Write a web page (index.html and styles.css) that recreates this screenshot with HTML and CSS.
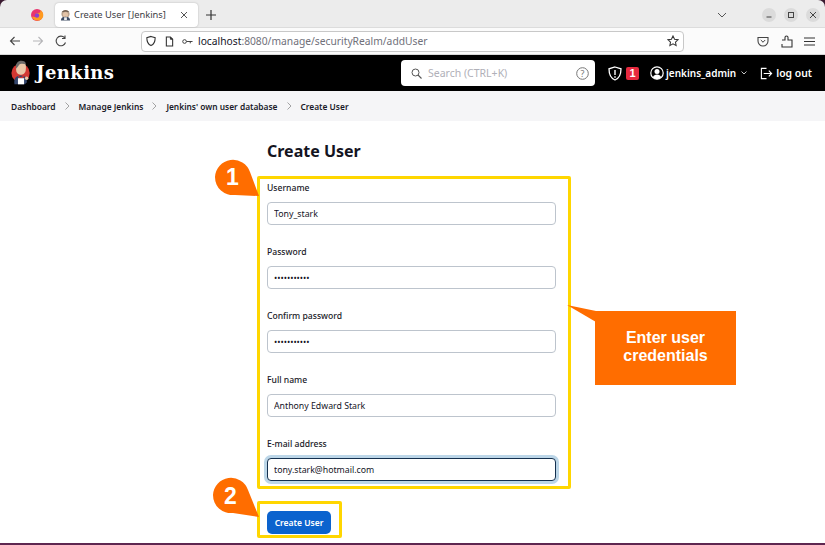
FILE: index.html
```html
<!DOCTYPE html>
<html lang="en">
<head>
<meta charset="utf-8">
<title>Create User [Jenkins]</title>
<link rel="stylesheet" href="styles.css">
</head>
<body>
<div class="tabbar">
  <svg class="ff" width="14" height="14" viewBox="0 0 14 14"><circle cx="7" cy="7" r="6" fill="#e8356f"/><path d="M2 9a6 6 0 0 0 11 0c1-3-.5-6-3-7 1 2 0 3-2 3S5 6 5.500 8 2 8 2 9z" fill="#ff9a1f"/><circle cx="7" cy="7.500" r="2.200" fill="#8a3fd1"/></svg>
  <div class="tab">
    <svg class="fav" width="11" height="12" viewBox="0 0 12 12"><circle cx="6" cy="5" r="4.500" fill="#b9a28d"/><path d="M2 3c1-3 7-3 8 0-2-1-6-1-8 0z" fill="#5a4a3d"/><circle cx="6" cy="5.500" r="2.800" fill="#e3c3a6"/><path d="M1 12c0-3 2-4 5-4s5 1 5 4z" fill="#3d4b63"/><rect x="4.500" y="8.500" width="3" height="3" fill="#eee"/></svg>
    <span class="tabtitle">Create User [Jenkins]</span>
    <svg class="tabx" width="8" height="8" viewBox="0 0 8 8"><path d="M1 1l6 6M7 1L1 7" stroke="#555" stroke-width="1"/></svg>
  </div>
  <svg class="plus" width="10" height="10" viewBox="0 0 10 10"><path d="M5 0v10M0 5h10" stroke="#333" stroke-width="1.200"/></svg>
  <svg class="tabdrop" width="10" height="6" viewBox="0 0 10 6"><path d="M1 1l4 4 4-4" fill="none" stroke="#555" stroke-width="1"/></svg>
  <div class="winbtn"><svg width="8" height="8" viewBox="0 0 8 8"><path d="M1.500 6h5" stroke="#444"/></svg></div>
  <div class="winbtn"><svg width="8" height="8" viewBox="0 0 8 8"><rect x="1.500" y="1.500" width="5" height="5" fill="none" stroke="#444"/></svg></div>
  <div class="winbtn"><svg width="8" height="8" viewBox="0 0 8 8"><path d="M1 1l6 6M7 1L1 7" stroke="#444"/></svg></div>
</div>

<div class="navbar">
  <svg class="navicon" width="12" height="12" viewBox="0 0 12 12"><path d="M11 6H1.500M5.500 2l-4 4 4 4" fill="none" stroke="#444" stroke-width="1.100"/></svg>
  <svg class="navicon" width="12" height="12" viewBox="0 0 12 12"><path d="M1 6h9.500M6.500 2l4 4-4 4" fill="none" stroke="#b5b5b8" stroke-width="1.100"/></svg>
  <svg class="navicon" width="12" height="12" viewBox="0 0 12 12"><path d="M10.500 7.500A4.800 4.800 0 1 1 9.500 2.700M10 .5v3H7" fill="none" stroke="#444" stroke-width="1.100"/></svg>
  <div class="urlbar">
    <svg width="10" height="12" viewBox="0 0 12 13"><path d="M6 1l5 1.500c0 5-1.500 8-5 9.500C2.500 10.500 1 7.500 1 2.500z" fill="none" stroke="#333" stroke-width="1.300"/></svg>
    <svg class="page" width="9" height="11" viewBox="0 0 10 12"><path d="M1.500 1h4.500l2.500 2.500V11h-7z" fill="none" stroke="#333" stroke-width="1.200"/><path d="M6 1v2.500h2.500" fill="#333" stroke="#333"/></svg>
    <svg class="key" width="11" height="7" viewBox="0 0 12 7"><circle cx="2.800" cy="3.500" r="2" fill="none" stroke="#333"/><path d="M5 3.500h6.500M9 3.500v2" stroke="#333"/></svg>
    <span class="url"><b>localhost</b>:8080/manage/securityRealm/addUser</span>
    <svg class="star" width="12" height="12" viewBox="0 0 13 13"><path d="M6.500 1l1.700 3.600 3.800.5-2.800 2.600.7 3.800-3.400-1.900-3.400 1.900.7-3.800L1 5.100l3.800-.5z" fill="none" stroke="#333" stroke-width="1.100"/></svg>
  </div>
  <svg class="pocket" width="12" height="11" viewBox="0 0 12 11"><path d="M1 1.500h10V5a5 5 0 0 1-10 0z" fill="none" stroke="#444" stroke-width="1.100"/><path d="M3.800 4L6 6.200 8.200 4" fill="none" stroke="#444"/></svg>
  <svg class="ext" width="12" height="13" viewBox="0 0 12 13"><path d="M1 5h3V2.500a1.500 1.500 0 0 1 3 0V5h4v7H1v-3" fill="none" stroke="#333" stroke-width="1.100"/></svg>
  <svg class="menu" width="11" height="9" viewBox="0 0 11 9"><path d="M0 1h11M0 4.500h11M0 8h11" stroke="#333" stroke-width="1.100"/></svg>
</div>

<header class="jheader">
  <svg class="jlogo" width="20" height="26" viewBox="0 0 23 28">
    <circle cx="11" cy="14" r="10.500" fill="#d33833"/>
    <path d="M4 27c-1-6 1-10 7-10s8 4 7 8l-2 2z" fill="#34466c"/>
    <path d="M6 11c-1-8 2-10 6-10s6 3 5 9c0 3-2 6-5 6-3 0-6-2-6-5z" fill="#eac7a8"/>
    <path d="M6 9c-1-6 2-9 6-9 3 0 5 1 5 4-3-1-7-1-8 1z" fill="#6c6a68"/>
    <path d="M8 17l3 2 4-2-1 3h-5z" fill="#d33833"/>
    <rect x="8" y="20" width="7" height="7" fill="#fff"/>
    <circle cx="18" cy="20" r="2" fill="#eac7a8"/>
  </svg>
  <span class="jname">Jenkins</span>
  <div class="search">
    <svg width="11" height="11" viewBox="0 0 11 11"><circle cx="4.500" cy="4.500" r="3.500" fill="none" stroke="#555" stroke-width="1"/><path d="M7 7l3.500 3.500" stroke="#555" stroke-width="1.100"/></svg>
    <span class="searchtext">Search (CTRL+K)</span>
    <svg class="help" width="13" height="13" viewBox="0 0 13 13"><circle cx="6.500" cy="6.500" r="5.800" fill="none" stroke="#777" stroke-width="1"/><text x="6.500" y="9.500" text-anchor="middle" class="helpq">?</text></svg>
  </div>
  <svg class="warnshield" width="14" height="15" viewBox="0 0 14 15"><path d="M7 1l6 1.800c0 6-2 9.700-6 11.200C3 12.500 1 8.800 1 2.800z" fill="none" stroke="#fff" stroke-width="1.300"/><path d="M7 4v5M7 10.300v1.400" stroke="#fff" stroke-width="1.400"/></svg>
  <span class="badge">1</span>
  <svg class="usericon" width="14" height="14" viewBox="0 0 14 14"><circle cx="7" cy="7" r="6.200" fill="none" stroke="#fff" stroke-width="1.200"/><circle cx="7" cy="5.500" r="2.500" fill="#fff"/><path d="M2.800 11.500c.8-2.300 2.300-3 4.200-3s3.400.7 4.200 3A6 6 0 0 1 2.800 11.500z" fill="#fff"/></svg>
  <span class="uname">jenkins_admin</span>
  <svg class="chev" width="6" height="4" viewBox="0 0 6 4"><path d="M.5.500L3 3 5.500.500" fill="none" stroke="#ddd" stroke-width=".9"/></svg>
  <svg class="logout" width="13" height="13" viewBox="0 0 14 13"><path d="M6 1H1.500v11H6M7 1h-1M6 12h1" fill="none" stroke="#fff" stroke-width="1.200"/><path d="M4 6.500h8.500M9.500 3.500l3 3-3 3" fill="none" stroke="#fff" stroke-width="1.200"/></svg>
  <span class="logouttext">log out</span>
</header>

<nav class="crumbs">
  <span>Dashboard</span>
  <svg class="sep" width="5" height="8" viewBox="0 0 5 8"><path d="M.5.500L4 4 .5 7.500" fill="none" stroke="#999" stroke-width=".9"/></svg>
  <span>Manage Jenkins</span>
  <svg class="sep" width="5" height="8" viewBox="0 0 5 8"><path d="M.5.500L4 4 .5 7.500" fill="none" stroke="#999" stroke-width=".9"/></svg>
  <span>Jenkins' own user database</span>
  <svg class="sep" width="5" height="8" viewBox="0 0 5 8"><path d="M.5.500L4 4 .5 7.500" fill="none" stroke="#999" stroke-width=".9"/></svg>
  <span>Create User</span>
</nav>

<main class="content">
  <h1>Create User</h1>
  <form class="userform">
    <div class="field"><label for="f1">Username</label><input id="f1" type="text" value="Tony_stark"></div>
    <div class="field"><label for="f2">Password</label><input id="f2" class="pw" type="password" value="abcdefghijk"></div>
    <div class="field"><label for="f3">Confirm password</label><input id="f3" class="pw" type="password" value="abcdefghijk"></div>
    <div class="field"><label for="f4">Full name</label><input id="f4" type="text" value="Anthony Edward Stark"></div>
    <div class="field"><label for="f5">E-mail address</label><input id="f5" class="focus" type="text" value="tony.stark@hotmail.com"></div>
    <button type="button" class="submit">Create User</button>
  </form>
</main>

<div class="bottomline"></div>

<div class="hl hl1"></div>
<div class="hl hl2"></div>
<svg class="overlay" width="825" height="545" viewBox="0 0 825 545">
  <path d="M215 177a18 18 0 0 1 35 -5L259 196 235 195a18 18 0 0 1-20-18z" fill="#ff6d00"/>
  <path d="M213 495a18 18 0 0 1 35 -5L259 517 233 513a18 18 0 0 1-20-18z" fill="#ff6d00"/>
  <path d="M567 305L596 311V322z" fill="#ff6d00"/>
</svg>
<span class="num num1">1</span>
<span class="num num2">2</span>
<div class="callout">Enter user credentials</div>
</body>
</html>
```
FILE: styles.css
```css
* { box-sizing: border-box; }
html, body { margin: 0; padding: 0; }
body {
  width: 825px;
  height: 545px;
  overflow: hidden;
  position: relative;
  display: flex;
  flex-direction: column;
  background: #3a1a30;
  font-family: "Noto Sans", sans-serif;
  color: #14141f;
}
svg { flex-shrink: 0; }
.tabbar {
  height: 28px;
  flex-shrink: 0;
  background: #ececec;
  border-radius: 7px 7px 0 0;
  display: flex;
  align-items: center;
  padding-top: 2px;
  border-bottom: 1px solid #dcdcdc;
}
.ff { margin-left: 30px; }
.tab {
  margin-left: 11px;
  width: 143px;
  height: 24px;
  flex-shrink: 0;
  background: #fff;
  border-radius: 4px;
  box-shadow: 0 0 2px rgba(0,0,0,.25);
  display: flex;
  align-items: center;
  padding-left: 5px;
}
.tabtitle { margin-left: 3px; font-size: 9.3px; color: #3c3c44; white-space: nowrap; }
.tabx { margin-left: auto; margin-right: 10px; }
.plus { margin-left: 8px; }
.tabdrop { margin-left: 501px; }
.winbtn {
  width: 14px;
  height: 14px;
  flex-shrink: 0;
  border-radius: 50%;
  background: #dbdbdb;
  display: flex;
  align-items: center;
  justify-content: center;
  margin-left: 8px;
}
.tabdrop + .winbtn { margin-left: 35px; }
.navbar {
  height: 27px;
  flex-shrink: 0;
  background: #fbfbfb;
  display: flex;
  align-items: center;
  padding-left: 9px;
  border-bottom: 1px solid #d8d8d8;
}
.navicon { margin-right: 11px; }
.urlbar {
  margin-left: 63px;
  width: 543px;
  height: 21px;
  flex-shrink: 0;
  background: #fff;
  border: 1px solid #c8c8c8;
  border-radius: 4px;
  display: flex;
  align-items: center;
  padding-left: 4px;
}
.page { margin-left: 9px; }
.key { margin-left: 8px; }
.url { margin-left: 5px; font-size: 10.27px; color: #70707a; white-space: nowrap; }
.url b { font-weight: 400; color: #14141f; }
.star { margin-left: auto; margin-right: 4px; }
.pocket { margin-left: 73px; }
.ext { margin-left: 12px; }
.menu { margin-left: 11px; }
.jheader {
  height: 36px;
  flex-shrink: 0;
  background: #000;
  color: #fff;
  display: flex;
  align-items: center;
  padding-left: 11px;
}
.jname {
  margin-left: 5px;
  padding-bottom: 2px;
  font-family: "DejaVu Serif", serif;
  font-weight: 700;
  font-size: 18px;
  letter-spacing: .4px;
  width: 365px;
  flex-shrink: 0;
}
.search {
  width: 194px;
  height: 26px;
  flex-shrink: 0;
  background: #fff;
  border-radius: 4px;
  display: flex;
  align-items: center;
  padding-left: 10px;
}
.searchtext { margin-left: 6px; font-size: 10.5px; color: #b0b0b8; }
.help { margin-left: auto; margin-right: 6px; }
.helpq { font: 9px "Noto Sans", sans-serif; fill: #777; }
.warnshield { margin-left: 13px; }
.badge {
  margin-left: 4px;
  width: 13px;
  height: 13px;
  flex-shrink: 0;
  background: #e6293e;
  border-radius: 2px;
  font-family: "Liberation Sans", sans-serif;
  font-weight: 700;
  font-size: 11px;
  line-height: 13px;
  text-align: center;
}
.usericon { margin-left: 11px; }
.uname { margin-left: 2px; font-size: 10px; font-weight: 600; white-space: nowrap; }
.chev { margin-left: 5px; }
.logout { margin-left: 13px; }
.logouttext { margin-left: 3px; font-size: 10.4px; font-weight: 600; white-space: nowrap; }
.crumbs {
  height: 30px;
  flex-shrink: 0;
  background: #f5f5f7;
  display: flex;
  align-items: center;
  padding-left: 11px;
  font-size: 8.4px;
  font-weight: 600;
  color: #1a1a28;
}
.sep { margin: 0 9px; }
.content { flex: 1; background: #fff; padding-left: 267px; }
h1 {
  margin: 20px 0 0;
  font-size: 16px;
  line-height: 20px;
  font-weight: 700;
}
.userform { display: flex; flex-direction: column; align-items: flex-start; margin-top: 18px; }
.field { height: 64px; padding-top: 3px; }
.field label {
  display: block;
  font-size: 8.6px;
  font-weight: 500;
  line-height: 13px;
  color: #1a1a28;
}
.field input {
  display: block;
  margin-top: 7px;
  width: 289px;
  height: 23px;
  padding: 0 6px;
  border: 1px solid #bdc4cd;
  border-radius: 4px;
  background: #fff;
  font-family: "Noto Sans", sans-serif;
  font-size: 8.75px;
  color: #14141f;
  outline: none;
}
.field input.pw { font-size: 8.6px; }
.field input.focus {
  border: 1.500px solid #14304f;
  box-shadow: 0 0 0 3px #bcd6e8;
}
.submit {
  width: 64px;
  height: 23px;
  margin-top: 12px;
  background: #0b63ce;
  color: #fff;
  border: 0;
  border-radius: 5px;
  padding: 0;
  font-family: "Noto Sans", sans-serif;
  font-size: 8.5px;
  font-weight: 600;
}
.bottomline {
  height: 2px;
  flex-shrink: 0;
  background: #5e2750;
}
.hl {
  position: absolute;
  border: 3px solid #ffd600;
  border-radius: 2px;
}
.hl1 { left: 257px; top: 176px; width: 314px; height: 313px; }
.hl2 { left: 257px; top: 501px; width: 85px; height: 37px; }
.overlay { position: absolute; left: 0; top: 0; pointer-events: none; }
.num {
  position: absolute;
  font-family: "Liberation Sans", sans-serif;
  font-weight: 700;
  font-size: 23px;
  line-height: 26px;
  color: #fff;
}
.num1 { left: 226px; top: 164px; }
.num2 { left: 224px; top: 483px; }
.callout {
  position: absolute;
  left: 595px;
  top: 311px;
  width: 141px;
  height: 74px;
  background: #ff6d00;
  color: #fff;
  font-family: "Liberation Sans", sans-serif;
  font-weight: 700;
  font-size: 16px;
  line-height: 18px;
  text-align: center;
  padding: 18px 24px 0;
}
```
